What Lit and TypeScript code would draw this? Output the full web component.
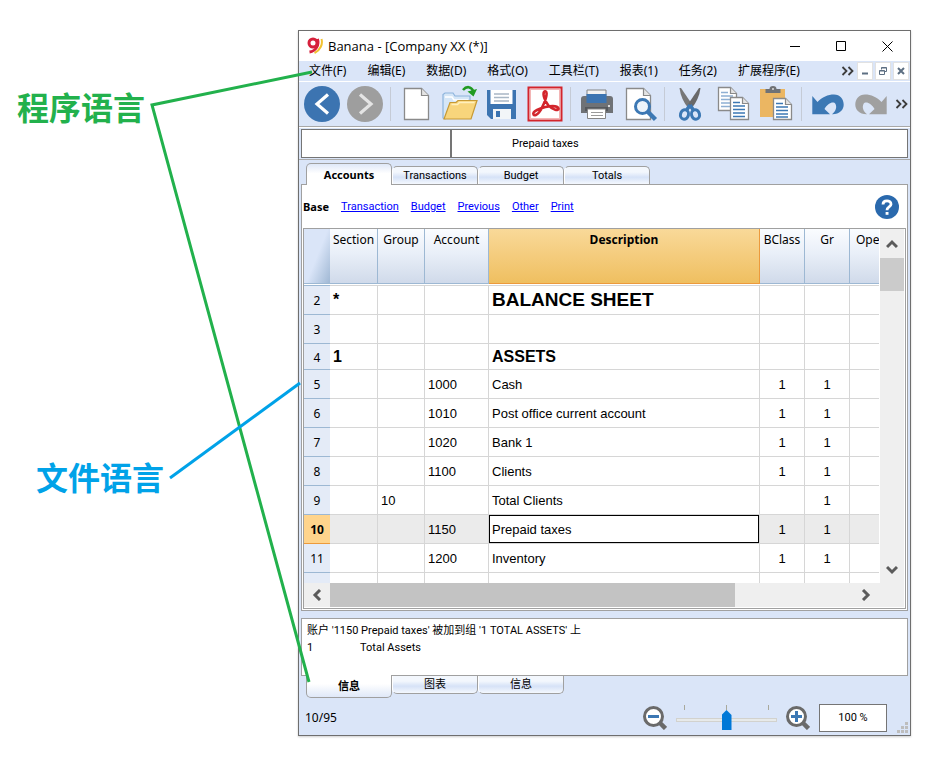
import { LitElement, html, svg, css, nothing } from "lit";
import { customElement } from "lit/decorators.js";
import { classMap } from "lit/directives/class-map.js";

interface Row {
  n: number;
  section?: string;
  group?: string;
  account?: string;
  text?: string;
  bclass?: string;
  gr?: string;
  kind?: "title" | "heading" | "current";
}

const ROWS: Row[] = [
  { n: 2, section: "*", text: "BALANCE SHEET", kind: "title" },
  { n: 3 },
  { n: 4, section: "1", text: "ASSETS", kind: "heading" },
  { n: 5, account: "1000", text: "Cash", bclass: "1", gr: "1" },
  { n: 6, account: "1010", text: "Post office current account", bclass: "1", gr: "1" },
  { n: 7, account: "1020", text: "Bank 1", bclass: "1", gr: "1" },
  { n: 8, account: "1100", text: "Clients", bclass: "1", gr: "1" },
  { n: 9, group: "10", text: "Total Clients", gr: "1" },
  { n: 10, account: "1150", text: "Prepaid taxes", bclass: "1", gr: "1", kind: "current" },
  { n: 11, account: "1200", text: "Inventory", bclass: "1", gr: "1" },
];

const MENUS = ["文件(F)", "编辑(E)", "数据(D)", "格式(O)", "工具栏(T)", "报表(1)", "任务(2)", "扩展程序(E)"];
const LINKS = ["Transaction", "Budget", "Previous", "Other", "Print"];

const chevrons = html`<svg width="13" height="10" viewBox="0 0 13 10" fill="none" stroke="#3c3c3c" stroke-width="1.8">
  <path d="M1.5 1 5.5 5 1.5 9M7.5 1l4 4-4 4" />
</svg>`;

const page = (x: number, y: number, w: number, h: number, f: number) => svg`
  <path d="M${x} ${y}h${w - f}l${f} ${f}v${h - f}h${-w}z" fill="#fff" stroke="#8a8a8a" stroke-width="1.3" />
  <path d="M${x + w - f} ${y}v${f}h${f}" fill="#e4e4e4" stroke="#8a8a8a" stroke-width="1.2" />`;

const ICONS: Record<string, unknown> = {
  Back: svg`<circle cx="21" cy="22" r="18" fill="#3c74b1" />
    <path d="M27 12.500 16 22l11 9.500" fill="none" stroke="#fff" stroke-width="3.200" />`,
  Forward: svg`<circle cx="21" cy="22" r="18" fill="#9e9e9e" />
    <path d="M16 12.500 27 22 16 31.500" fill="none" stroke="#e4e4e4" stroke-width="3.200" />`,
  New: page(9.5, 6.5, 24, 31, 7),
  Open: svg`<path d="M5 36V12.500l2-1.500h8l2 3h15v8H14L7 37z" fill="#d5e6f7" stroke="#8db4dc" stroke-width="1.200" />
    <path d="M7 15h7l2 3h14" fill="none" stroke="#fff" stroke-width="1.500" />
    <path d="M12 20.500h6l2-2h19l-6 18.500H6z" fill="#f8d57c" stroke="#c79a35" stroke-width="1.200" />
    <path d="M13.500 22.500h6l2-2h15" fill="none" stroke="#fff0bd" stroke-width="1.500" />
    <path d="M25 8c3.500-4 8-4 10.500 1.500" fill="none" stroke="#219a22" stroke-width="2.600" />
    <path d="m29.500 9.500 6 5L39 7z" fill="#219a22" />`,
  Save: svg`<path d="M6 8h29v29H10l-4-4z" fill="#3c74b1" />
    <path d="M9.500 8h22v14h-22z" fill="#fff" />
    <path d="M13 12h15M13 15.500h15M13 19h15" stroke="#a9b7c5" stroke-width="1.500" />
    <path d="M12 27h18v10H12z" fill="#f2f5f8" /><path d="M15 29h4v6h-4z" fill="#3c74b1" />`,
  PDF: svg`<rect x="4.500" y="5.500" width="33" height="33" fill="#fff" stroke="#d3252c" stroke-width="2" />
    <rect x="6.500" y="7.500" width="29" height="29" fill="none" stroke="#f3b5b5" />
    <path d="M9.500 32.500c-1.500-3 7-6.500 12-7.500 6-1.300 12-1 13 1.500.6 2.600-6 1.500-10-3-3.500-4-6-11-4.500-13.500 1-1.300 2.600-.8 2.600 1.500 0 5-4.600 15.500-7.600 19-2 2.400-4.600 3.600-5.500 2z" fill="none" stroke="#d3252c" stroke-width="2.600" />`,
  Print: svg`<path d="M12 8h19v8H12z" fill="#f2f2f2" stroke="#858585" />
    <path d="M6 17q0-3 3-3h26q3 0 3 3v14H6z" fill="#6f7276" />
    <path d="M11.500 12h20v9h-20z" fill="#3c74b1" />
    <path d="M10 25h23v4H10z" fill="#55585c" />
    <path d="M12.500 27h18v9.500h-18z" fill="#fff" stroke="#858585" />
    <path d="M16 30.500h12M16 33.500h12" stroke="#9a9a9a" /><circle cx="34" cy="24" r="1" fill="#fff" />`,
  Preview: svg`${page(8.5, 6.500, 24, 31, 7)}
    <circle cx="24.500" cy="24.500" r="7" fill="#edf4fb" stroke="#3c78b4" stroke-width="3" />
    <path d="m29.500 29.500 8 8" stroke="#3c78b4" stroke-width="4.500" />`,
  Cut: svg`<path d="M10.500 6h1.500L23.500 23 20 27Q12 18 10.500 6z" fill="#767676" />
    <path d="M31.500 6H30L18.500 23l3.500 4Q30 18 31.500 6z" fill="#696969" />
    <path d="m21 23-4 6M21 23l4 6" stroke="#3c78b4" stroke-width="3.500" />
    <ellipse cx="15.500" cy="32.500" rx="4" ry="4.800" fill="none" stroke="#3c78b4" stroke-width="3" transform="rotate(14 15.500 32.500)" />
    <ellipse cx="26.500" cy="32.500" rx="4" ry="4.800" fill="none" stroke="#3c78b4" stroke-width="3" transform="rotate(-14 26.500 32.500)" />`,
  Copy: svg`${page(6.500, 5.500, 18, 23, 6)}
    <path d="M9 10.500h7M9 14h12M9 17.500h12M9 21h12M9 24.500h12" stroke="#8fb0d3" stroke-width="1.300" />
    ${page(18.500, 15.500, 18, 22, 6)}
    <path d="M21 20.500h7M21 24h12M21 27.500h12M21 31h12M21 34.500h12" stroke="#3c78b4" stroke-width="1.300" />`,
  Paste: svg`<path d="M5 7h25v28H5z" fill="#ebb662" />
    <path d="M10.500 11V7h4q0-3 3.500-3t3.500 3h4v4z" fill="#6f7276" /><circle cx="18" cy="7" r="1" fill="#ddd" />
    ${page(18.500, 16.500, 18, 21, 6)}
    <path d="M21 21.500h7M21 25h12M21 28.500h12M21 32h12M21 35h12" stroke="#3c78b4" stroke-width="1.300" />`,
  Undo: svg`<path d="M6.300 14v18.300H24l-5.500-5.300c3-5.500 9-8.500 11-5 1.500 3 .5 7-3.500 10.300 7.500.2 11.700-4.500 11.700-9.500C37.700 17 34 12.500 28 12.500c-6 0-12 2.500-16.500 7.500z" fill="#3c78b4" />`,
  Redo: svg`<path d="M37.700 14v18.300H20l5.500-5.300c-3-5.500-9-8.500-11-5-1.500 3-.5 7 3.500 10.300-7.500.2-11.700-4.500-11.700-9.500C6.300 17 10 12.500 16 12.500c6 0 12 2.500 16.500 7.500z" fill="#a0a0a0" />`,
};

const TOOLS = [
  ["Back", "Forward"],
  ["New", "Open", "Save", "PDF"],
  ["Print", "Preview"],
  ["Cut", "Copy", "Paste"],
  ["Undo", "Redo"],
];

const arrow = (d: string) => html`<svg width="12" height="12" viewBox="0 0 12 12" fill="none" stroke="#5b5b5b" stroke-width="3"><path d=${d} /></svg>`;

@customElement("app-root")
export class AppRoot extends LitElement {
  static styles = css`
    :host {
      display: block;
      position: relative;
      background: #fff;
      color: #000;
      font: 12px/16px "Noto Sans", "Noto Sans CJK SC", sans-serif;
    }
    *, *::before, *::after { box-sizing: border-box; }
    button, input {
      font: inherit;
      color: inherit;
      margin: 0;
      padding: 0;
      border: 0;
      border-radius: 0;
      background: none;
    }
    svg { display: block; }
    .stage { display: flex; min-height: 773px; padding: 30px 35px 37px 0; align-items: flex-start; }
    .notes {
      flex: 0 0 298px;
      padding: 52px 0 0 17px;
      font: bold 32px/48px "Noto Sans CJK SC", sans-serif;
    }
    .notes p { margin: 0; }
    .program { color: #22b14c; }
    .notes .document { color: #00a2e8; margin: 322px 0 0 19px; }
    .leaders { position: absolute; left: 0; top: 0; pointer-events: none; }

    .window {
      flex: 1;
      min-width: 0;
      border: 1px solid #6e6e6e;
      background: #dae5f8;
      box-shadow: 0 1px 2px #0003;
    }
    .titlebar { display: flex; align-items: center; height: 30px; padding-left: 8px; gap: 5px; background: #fff; }
    .titlebar h1 { flex: 1; margin: 0; font: 13px/18px "Open Sans", sans-serif; }
    .caption { display: flex; }
    .caption button { width: 46px; height: 30px; display: grid; place-items: center; }

    .menubar { display: flex; align-items: center; height: 21px; padding-right: 1px; border-bottom: 1px solid #fff; }
    .menus { display: flex; flex: 1; gap: 1px; }
    .menus button { padding: 0 10px; white-space: nowrap; line-height: 20px; }
    .more { padding: 0 3px; }
    .mdi { display: flex; gap: 2px; }
    .mdi button { width: 16px; height: 18px; background: #fff; border: 1px solid #e2e2e2; display: grid; place-items: center; }

    .toolbar { display: flex; height: 45px; padding-left: 2px; border-bottom: 1px solid #a8a8a8; }
    .set { display: flex; }
    .set + .set::before { content: ""; width: 1px; margin: 5px 4px 5px 3px; background: #c5cbd6; }
    .set button { width: 43px; height: 44px; }
    .toolbar .more { margin-left: auto; padding: 0 3px; }

    .entry { display: flex; padding: 1px 2px; border-bottom: 1px solid #ababab; border-top: 1px solid #fff; }
    .entry input { height: 29px; border: 1px solid #757575; background: #fff; min-width: 0; }
    .entry .cellref { width: 151px; border-right-width: 2px; }
    .entry .value { flex: 1; border-left: 0; padding-left: 60px; }
    .entry input, .tabs button, .views, .messages, .percent {
      font-family: Roboto, "Noto Sans CJK SC", sans-serif;
      font-size: 11px;
    }

    .tabs { display: flex; padding: 3px 7px 0; align-items: flex-end; }
    .tabs button {
      width: 86px;
      height: 18px;
      border: 1px solid #a0a0a0;
      border-left-color: #fff;
      border-bottom: 0;
      border-radius: 5px 5px 0 0;
      background: linear-gradient(#f3f7fd 0 30%, #d6e2f7 60%, #f4f8fe);
      line-height: 16px;
    }
    .tabs .on {
      position: relative;
      height: 22px;
      margin-bottom: -1px;
      border-left-color: #a0a0a0;
      background: linear-gradient(#dfe8f8, #fff 45%);
      font-family: "Noto Sans", "Noto Sans CJK SC", sans-serif;
      font-weight: bold;
    }
    .tabs.below { padding: 0 7px; align-items: flex-start; }
    .below button { border: 1px solid #a0a0a0; border-top: 0; border-radius: 0 0 5px 5px; border-left-color: #fff; line-height: 16px; }
    .below .on { height: 23px; margin: -1px 0 0; background: linear-gradient(#fff 40%, #dfe8f8); }

    .pane { margin: 0 2px; border: 1px solid #a0a0a0; padding: 0 1px 1px; background: #fff; }
    .views { display: flex; align-items: center; gap: 12px; height: 43px; padding-right: 7px; }
    .views b { font-family: "Noto Sans", sans-serif; }
    .views a { color: #00f; }
    .help { margin-left: auto; width: 24px; height: 24px; }
    .sheet { display: grid; grid-template-columns: minmax(0, 1fr) 24px; border: 1px solid #a0a0a0; padding: 0 1px 1px 0; }
    .cells { padding: 0 1px 1px 0; height: 354px; overflow: hidden; }
    table { width: 100%; table-layout: fixed; border-spacing: 0; border-collapse: separate; font: 13px/16px "Liberation Sans", sans-serif; }
    th, td { padding: 0; text-align: left; font-weight: normal; overflow: hidden; white-space: nowrap; }
    .c-num { width: 26px; } .c-section { width: 48px; } .c-group { width: 47px; }
    .c-account { width: 64px; } .c-side { width: 45px; } .c-open { width: 29px; }
    thead th {
      height: 55px;
      padding-top: 3px;
      vertical-align: top;
      text-align: center;
      font: 12px/16px "Noto Sans", sans-serif;
      background: linear-gradient(#fafcff, #e9eff8 45%, #d0daea);
      border-right: 1px solid #9db8d3;
      border-bottom: 1px solid #9db8d3;
    }
    thead .corner { border-right: 0; background: linear-gradient(112deg, #dae5f8 50%, #a0b8d4); }
    thead .picked { background: linear-gradient(#f9d999, #efbf60); border-color: #ec9a3c; font-weight: bold; }
    thead .cut { border-right: 0; padding-left: 6px; text-align: left; }
    tbody td, tbody th { height: 29px; padding-top: 2px; border-bottom: 1px solid #d6d6d6; }
    tbody td { border-right: 1px solid #d6d6d6; padding: 2px 3px 0; }
    tbody td:last-child { border-right: 0; }
    tbody th { background: #e4ebf7; border-color: #9db8d3; text-align: center; font: 12px/16px "Noto Sans", sans-serif; }
    tbody .gap td, tbody .gap th { height: 2px; padding: 0; border-right: 0; }
    tbody .gap th { background: #fff; }
    tbody .mid { text-align: center; }
    .title td, .heading td { padding-top: 0; font-weight: bold; font-size: 16px; line-height: 20px; }
    .title .desc { font-size: 19px; }
    .heading td, .heading th { height: 26px; }
    .current td { background: #ebebeb; }
    .current .desc { background: #fff; box-shadow: inset 0 0 0 1px #000; }
    .current th { background: #ffd48c; border-color: #ec9a3c; font-weight: bold; }
    .vbar { display: flex; flex-direction: column; background: #efefef; }
    .hbar { grid-column: 1 / -1; display: flex; height: 24px; padding-right: 24px; background: #efefef; }
    .vbar button { height: 29px; display: grid; place-items: center; }
    .vthumb { height: 33px; background: #cbcbcb; }
    .vbar button:last-child { margin-top: auto; height: 27px; }
    .hbar button { width: 28px; display: grid; place-items: center; }
    .hbar button:first-child { width: 26px; }
    .track { flex: 1; }
    .hthumb { width: 77.5%; height: 24px; background: #c3c3c3; }

    .messages {
      margin: 7px 2px 0;
      height: 58px;
      padding: 3px 5px;
      border: 1px solid #a0a0a0;
      background: #fff;
      line-height: 17px;
    }
    .messages p { margin: 0; display: flex; }
    .messages .code { width: 53px; }

    .status { display: flex; align-items: center; height: 37px; padding: 2px 2px 0 6px; }
    .status output { flex: 1; }
    .zoom { display: flex; align-items: center; gap: 9px; }
    .range { width: 101px; }
    .ticks { display: flex; justify-content: space-between; padding: 0 8px; height: 5px; }
    .ticks i { width: 1px; height: 5px; background: #a9a99c; }
    .range input { appearance: none; -webkit-appearance: none; display: block; width: 101px; height: 21px; }
    .range input::-webkit-slider-runnable-track { height: 4px; background: #e7eaea; border: 1px solid #d2d2ce; }
    .range input::-webkit-slider-thumb {
      -webkit-appearance: none;
      width: 10px;
      height: 20px;
      margin-top: -9px;
      background: #0078d7;
      clip-path: polygon(0 25%, 50% 0, 100% 25%, 100% 100%, 0 100%);
    }
    .percent { width: 68px; height: 28px; border: 1px solid #757575; background: #fff; text-align: center; }
    .grip { align-self: flex-end; margin: 0 0 2px 10px; }
  `;

  private renderRow(r: Row) {
    return html`<tr class=${classMap({ [r.kind ?? "plain"]: true })}>
      <th scope="row">${r.n}</th>
      <td>${r.section}</td>
      <td>${r.group}</td>
      <td>${r.account}</td>
      <td class="desc">${r.text}</td>
      <td class="mid">${r.bclass}</td>
      <td class="mid">${r.gr}</td>
      <td></td>
    </tr>`;
  }

  private renderSheet() {
    return html`<div class="sheet">
      <div class="cells">
        <table>
          <colgroup>
            <col class="c-num" /><col class="c-section" /><col class="c-group" /><col class="c-account" />
            <col /><col class="c-side" /><col class="c-side" /><col class="c-open" />
          </colgroup>
          <thead>
            <tr>
              <th class="corner"></th>
              <th>Section</th><th>Group</th><th>Account</th>
              <th class="picked">Description</th>
              <th>BClass</th><th>Gr</th><th class="cut">Ope</th>
            </tr>
          </thead>
          <tbody>
            <tr class="gap"><th></th><td colspan="7"></td></tr>
            ${ROWS.map((r) => this.renderRow(r))}
            <tr><th></th>${[1, 2, 3, 4, 5, 6, 7].map(() => html`<td></td>`)}</tr>
          </tbody>
        </table>
      </div>
      <div class="vbar">
        <button aria-label="Scroll up">${arrow("M1 9 6 4l5 5")}</button>
        <div class="vthumb"></div>
        <button aria-label="Scroll down">${arrow("M1 3l5 5 5-5")}</button>
      </div>
      <div class="hbar">
        <button aria-label="Scroll left">${arrow("M9 1 4 6l5 5")}</button>
        <div class="track"><div class="hthumb"></div></div>
        <button aria-label="Scroll right">${arrow("M3 1l5 5-5 5")}</button>
      </div>
    </div>`;
  }

  private renderTabs(names: string[], below = false) {
    return html`<div class=${classMap({ tabs: true, below })} role="tablist">
      ${names.map((t, i) => html`<button role="tab" class=${i === 0 ? "on" : nothing} aria-selected=${i === 0}>${t}</button>`)}
    </div>`;
  }

  private lens(sign: string) {
    return html`<svg width="24" height="24" viewBox="0 0 24 24">
      <path d="m16 16 6.500 6.500" stroke="#6a6a6a" stroke-width="4.500" />
      <circle cx="10.500" cy="10.500" r="9" fill="#fff" stroke="#6a6a6a" stroke-width="3" />
      <path d=${sign} stroke="#3c78b4" stroke-width="3" />
    </svg>`;
  }

  render() {
    return html`
      <main class="stage">
        <div class="notes">
          <p class="program">程序语言</p>
          <p class="document">文件语言</p>
        </div>
        <section class="window">
          <header class="titlebar">
            <svg width="16" height="18" viewBox="0 0 16 18" fill="none">
              <path d="M14.500 2c1.500 5-1 11-7 14" stroke="#f2c230" stroke-width="2" />
              <circle cx="6" cy="6" r="4" stroke="#d6213c" stroke-width="3" />
              <path d="M10.500 2c2 6-1.500 12-8 13" stroke="#d6213c" stroke-width="2.800" />
            </svg>
            <h1>Banana - [Company XX (*)]</h1>
            <div class="caption">
              <button aria-label="Minimize"><svg width="11" height="11" stroke="#000"><path d="M0 5.500h10" /></svg></button>
              <button aria-label="Maximize"><svg width="11" height="11" stroke="#000" fill="none"><path d="M.5.5h9v9h-9z" /></svg></button>
              <button aria-label="Close"><svg width="11" height="11" stroke="#000"><path d="m.5.5 10 10M10.500.5l-10 10" /></svg></button>
            </div>
          </header>
          <nav class="menubar">
            <div class="menus">${MENUS.map((m) => html`<button>${m}</button>`)}</div>
            <button class="more" aria-label="More menus">${chevrons}</button>
            <div class="mdi">
              <button aria-label="Minimize sheet"><svg width="8" height="8"><path d="M1 6.500h6" stroke="#5d6f82" stroke-width="2" /></svg></button>
              <button aria-label="Restore sheet"><svg width="8" height="8" fill="none" stroke="#5d6f82"><path d="M2.500 2.500v-2h5v4h-2M.5 3.500h5v4h-5zM.5 4h5M2.500 1h5" /></svg></button>
              <button aria-label="Close sheet"><svg width="8" height="8" stroke="#5d6f82" stroke-width="2"><path d="m1 1 6 6M7 1 1 7" /></svg></button>
            </div>
          </nav>
          <div class="toolbar" role="toolbar">
            ${TOOLS.map(
              (set) => html`<div class="set">
                ${set.map((t) => html`<button aria-label=${t}><svg width="43" height="44" viewBox="0 0 43 44">${ICONS[t]}</svg></button>`)}
              </div>`
            )}
            <button class="more" aria-label="More tools">${chevrons}</button>
          </div>
          <div class="entry">
            <input class="cellref" aria-label="Cell" />
            <input class="value" aria-label="Cell content" value="Prepaid taxes" />
          </div>
          ${this.renderTabs(["Accounts", "Transactions", "Budget", "Totals"])}
          <div class="pane">
            <nav class="views">
              <b>Base</b>${LINKS.map((l) => html`<a href="#">${l}</a>`)}
              <button class="help" aria-label="Help">
                <svg width="24" height="24" viewBox="0 0 24 24" fill="none">
                  <circle cx="12" cy="12" r="12" fill="#2a69ad" />
                  <path d="M8 9.500C8 4.800 16 4.800 16 9.200c0 2.800-4 2.800-4 6" stroke="#fff" stroke-width="2.800" />
                  <path d="M10.600 17h2.900v2.800h-2.900z" fill="#fff" />
                </svg>
              </button>
            </nav>
            ${this.renderSheet()}
          </div>
          <div class="messages">
            <p>账户 '1150 Prepaid taxes' 被加到组 '1 TOTAL ASSETS' 上</p>
            <p><span class="code">1</span><span>Total Assets</span></p>
          </div>
          ${this.renderTabs(["信息", "图表", "信息"], true)}
          <footer class="status">
            <output>10/95</output>
            <div class="zoom">
              <button aria-label="Zoom out">${this.lens("M5 10.500h11")}</button>
              <div class="range">
                <div class="ticks"><i></i><i></i><i></i></div>
                <input type="range" min="0" max="200" value="100" aria-label="Zoom" />
              </div>
              <button aria-label="Zoom in">${this.lens("M5 10.500h11M10.500 5v11")}</button>
              <input class="percent" value="100 %" aria-label="Zoom percent" />
            </div>
            <svg class="grip" width="11" height="11" fill="#bdbdbd">
              <path d="M8 0h3v3H8zM4 4h3v3H4zM8 4h3v3H8zM0 8h3v3H0zM4 8h3v3H4zM8 8h3v3H8z" />
            </svg>
          </footer>
        </section>
      </main>
      <svg class="leaders" width="320" height="700" fill="none" stroke-width="3">
        <path d="M312 72 152 105l157 577" stroke="#22b14c" />
        <path d="m170 478 130-95" stroke="#00a2e8" />
      </svg>
    `;
  }
}
